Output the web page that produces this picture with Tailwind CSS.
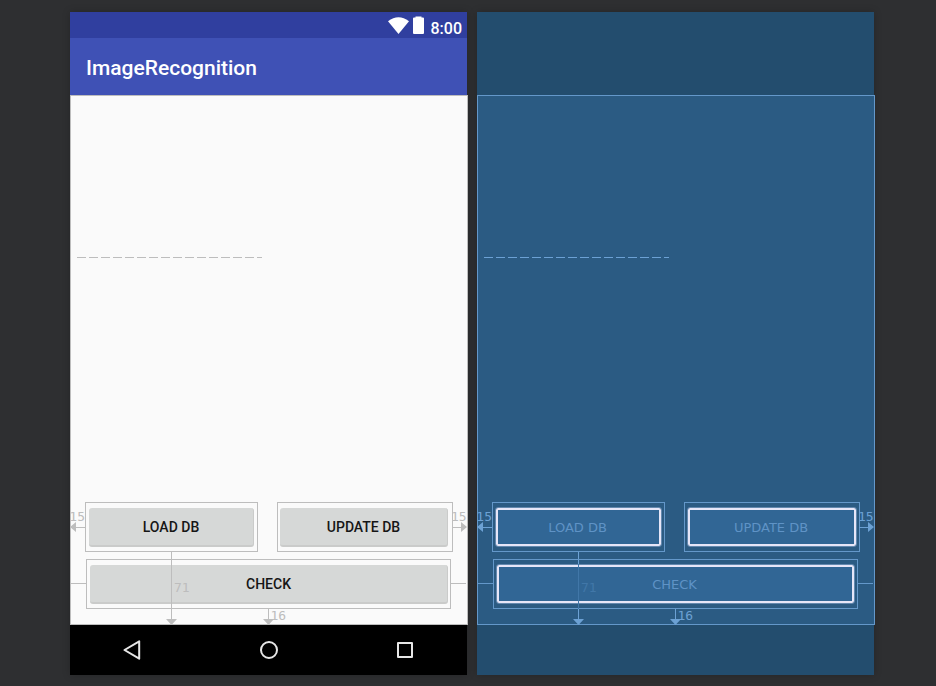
<!DOCTYPE html>
<html lang="en">
<head>
<meta charset="utf-8">
<meta name="viewport" content="width=device-width, initial-scale=1">
<title>ImageRecognition layout editor</title>
<script src="https://cdn.jsdelivr.net/npm/@tailwindcss/browser@4"></script>
</head>
<body class="bg-[#2e2f31]">
<main class="flex min-h-screen gap-[9px] pt-3 pb-[11px] pl-[70px] pr-[61px]">

  <!-- Design preview -->
  <section aria-label="Design" class="flex flex-1 flex-col font-['Roboto',sans-serif]">
    <div class="mr-px flex flex-1 flex-col shadow-[0_0_8px_rgba(0,0,0,0.2)]">
      <div class="flex h-[26px] items-center justify-end bg-[#303f9f] pr-[5px] text-white">
        <svg class="h-[17px] w-[21px]" viewBox="0 0 21 17" fill="currentColor" aria-label="Wi-Fi"><path d="M0 4.2Q10.500 -3.600 21 4.200L10.500 17Z"/></svg>
        <svg class="ml-1 h-[18px] w-[11px]" viewBox="0 0 11 18" fill="currentColor" aria-label="Battery"><path d="M2.500 0.500H8.500V1.500H10Q11 1.500 11 2.500V17Q11 18 10 18H1Q0 18 0 17V2.500Q0 1.500 1 1.500H2.500Z"/></svg>
        <span class="ml-[7px] pt-2 text-[16px] leading-5 font-medium">8:00</span>
      </div>
      <header class="flex h-[57px] items-center bg-[#3f51b5] pl-4 pt-[2px]">
        <h1 class="text-[21px] leading-6 font-medium text-white">ImageRecognition</h1>
      </header>
      <div class="-mr-px flex flex-1 flex-col border border-[#bdbdbd] bg-[#fafafa]">
        <div class="mt-[161px] ml-1.5 h-px w-[185px] bg-[repeating-linear-gradient(to_right,#bdbdbd_0_9px,transparent_9px_12px)]"></div>
        <div class="mt-auto grid grid-cols-[173fr_176fr] gap-[19px] px-[14px]">
          <div class="relative flex h-[50px] border border-[#bdbdbd] pt-[5px] pr-[3px] pb-1 pl-[3px]">
            <button class="flex-1 rounded-[3px] border-r border-b-2 border-[#cacbca] bg-[#d6d8d7] text-[14px] leading-5 font-medium text-[#161616]">LOAD DB</button>
            <svg class="absolute top-[19px] right-full mr-px h-[10px] w-[15px] text-[#bdbdbd]" viewBox="0 0 15 10" fill="currentColor"><path d="M0 5L6 0V10ZM6 5H15V6H6Z"/></svg>
            <span class="absolute top-[6px] right-full mr-px font-['DejaVu_Sans_Mono',monospace] text-[13px] leading-4 text-[#bdbdbd]">15</span>
            <svg class="absolute top-[49px] left-[80px] z-10 h-[73px] w-[11px] text-[#bdbdbd]" viewBox="0 0 11 73" fill="currentColor"><path d="M5 0H6V67H5ZM0 67H11L5.500 73Z"/></svg>
            <span class="absolute top-[77px] left-[88px] z-10 font-['DejaVu_Sans_Mono',monospace] text-[13px] leading-4 text-[#bdbdbd]">71</span>
          </div>
          <div class="relative flex h-[50px] border border-[#bdbdbd] pt-[5px] pr-1 pb-1 pl-[2px]">
            <button class="flex-1 rounded-[3px] border-r border-b-2 border-[#cacbca] bg-[#d6d8d7] text-[14px] leading-5 font-medium text-[#161616]">UPDATE DB</button>
            <svg class="absolute top-[19px] left-full h-[10px] w-[15px] text-[#bdbdbd]" viewBox="0 0 15 10" fill="currentColor"><path d="M15 5L9 0V10ZM0 5H9V6H0Z"/></svg>
            <span class="absolute top-[6px] left-full -ml-px font-['DejaVu_Sans_Mono',monospace] text-[13px] leading-4 text-[#bdbdbd]">15</span>
          </div>
        </div>
        <div class="relative mt-[7px] mr-4 mb-[15px] ml-[15px] flex h-[50px] border border-[#bdbdbd] pt-[5px] pr-[2px] pb-1 pl-[3px]">
          <button class="flex-1 rounded-[3px] border-r border-b-2 border-[#cacbca] bg-[#d6d8d7] text-[14px] leading-5 font-medium text-[#161616]">CHECK</button>
          <span class="absolute top-[23px] right-full h-px w-4 bg-[#bdbdbd]"></span>
          <span class="absolute top-[23px] left-full h-px w-4 bg-[#bdbdbd]"></span>
          <svg class="absolute top-[49px] left-1/2 -ml-1.5 h-4 w-[11px] text-[#bdbdbd]" viewBox="0 0 11 16" fill="currentColor"><path d="M5 0H6V10H5ZM0 10H11L5.500 16Z"/></svg>
          <span class="absolute top-[48px] left-1/2 ml-0.5 font-['DejaVu_Sans_Mono',monospace] text-[13px] leading-4 text-[#bdbdbd]">16</span>
        </div>
      </div>
      <nav class="flex h-[50px] items-center justify-between bg-black px-[52px] text-[#e6e6e6]">
        <button aria-label="Back"><svg class="block h-5 w-5" viewBox="0 0 20 20" fill="none" stroke="currentColor" stroke-width="2" stroke-linejoin="round"><path d="M17.200 1.300V18.700L2.500 10Z"/></svg></button>
        <button aria-label="Home"><svg class="block h-5 w-5" viewBox="0 0 20 20" fill="none" stroke="currentColor" stroke-width="2"><circle cx="10" cy="10" r="8"/></svg></button>
        <button aria-label="Overview"><svg class="block h-5 w-5" viewBox="0 0 20 20" fill="none" stroke="currentColor" stroke-width="2" stroke-linejoin="round"><path d="M3 3H17V17H3Z"/></svg></button>
      </nav>
    </div>
  </section>

  <!-- Blueprint -->
  <section aria-label="Blueprint" class="flex flex-1 flex-col font-['DejaVu_Sans',sans-serif]">
    <div class="mr-px flex flex-1 flex-col bg-[#234d6e] pt-[83px] pb-[50px] shadow-[0_0_8px_rgba(0,0,0,0.2)]">
      <div class="-mr-px flex flex-1 flex-col border border-[#6498ca] bg-[#2b5b83]">
        <div class="mt-[161px] ml-1.5 h-px w-[185px] bg-[repeating-linear-gradient(to_right,#6ca1d4_0_9px,transparent_9px_12px)]"></div>
        <div class="mt-auto grid grid-cols-[173fr_176fr] gap-[19px] px-[14px]">
          <div class="relative flex h-[50px] border border-[#6498ca] pt-[5px] pr-[3px] pb-[5px] pl-[3px]">
            <button class="flex-1 rounded-[2px] border-2 border-[#e6e6f8] bg-[#316695] pt-0.5 pr-0.5 text-[13px] leading-4 text-[#5f93c6] outline outline-[#8aa9cd]/60">LOAD DB</button>
            <svg class="absolute top-[19px] right-full mr-px h-[10px] w-[15px] text-[#6ca1d4]" viewBox="0 0 15 10" fill="currentColor"><path d="M0 5L6 0V10ZM6 5H15V6H6Z"/></svg>
            <span class="absolute top-[6px] right-full mr-px font-['DejaVu_Sans_Mono',monospace] text-[13px] leading-4 text-[#6ca1d4]">15</span>
            <svg class="absolute top-[49px] left-[80px] h-[73px] w-[11px] text-[#6ca1d4]" viewBox="0 0 11 73" fill="currentColor"><path d="M5 0H6V12H5ZM5 57H6V67H5ZM0 67H11L5.500 73Z"/></svg>
            <span class="absolute top-[61px] left-[85px] z-10 h-[45px] w-px bg-[#4177a8]"></span>
            <span class="absolute top-[77px] left-[88px] z-10 font-['DejaVu_Sans_Mono',monospace] text-[13px] leading-4 text-[#4177a8]">71</span>
          </div>
          <div class="relative flex h-[50px] border border-[#6498ca] pt-[5px] pr-[3px] pb-[5px] pl-[3px]">
            <button class="flex-1 rounded-[2px] border-2 border-[#e6e6f8] bg-[#316695] pt-0.5 pr-0.5 text-[13px] leading-4 text-[#5f93c6] outline outline-[#8aa9cd]/60">UPDATE DB</button>
            <svg class="absolute top-[19px] left-full h-[10px] w-[15px] text-[#6ca1d4]" viewBox="0 0 15 10" fill="currentColor"><path d="M15 5L9 0V10ZM0 5H9V6H0Z"/></svg>
            <span class="absolute top-[6px] left-full -ml-px font-['DejaVu_Sans_Mono',monospace] text-[13px] leading-4 text-[#6ca1d4]">15</span>
          </div>
        </div>
        <div class="relative mt-[7px] mr-4 mb-[15px] ml-[15px] flex h-[50px] border border-[#6498ca] pt-[5px] pr-[3px] pb-[5px] pl-[3px]">
          <button class="flex-1 rounded-[2px] border-2 border-[#e6e6f8] bg-[#316695] pt-0.5 pr-0.5 text-[13px] leading-4 text-[#5f93c6] outline outline-[#8aa9cd]/60">CHECK</button>
          <span class="absolute top-[23px] right-full h-px w-4 bg-[#6498ca]"></span>
          <span class="absolute top-[23px] left-full h-px w-4 bg-[#6498ca]"></span>
          <svg class="absolute top-[49px] left-1/2 -ml-1.5 h-4 w-[11px] text-[#6ca1d4]" viewBox="0 0 11 16" fill="currentColor"><path d="M5 0H6V10H5ZM0 10H11L5.500 16Z"/></svg>
          <span class="absolute top-[48px] left-1/2 ml-0.5 font-['DejaVu_Sans_Mono',monospace] text-[13px] leading-4 text-[#6ca1d4]">16</span>
        </div>
      </div>
    </div>
  </section>
</main>
</body>
</html>
